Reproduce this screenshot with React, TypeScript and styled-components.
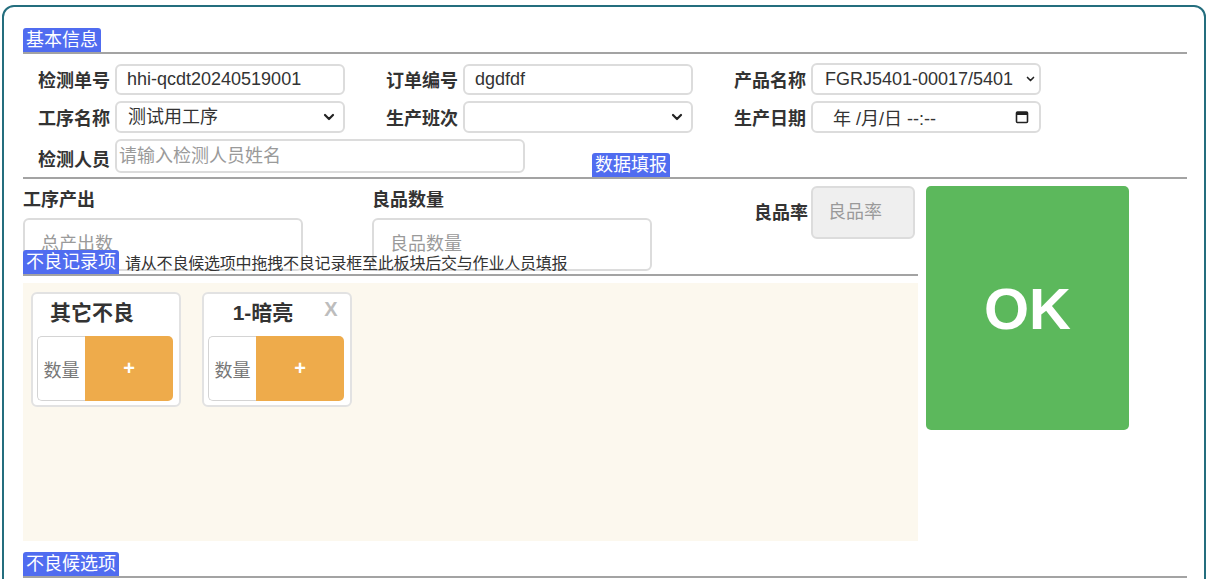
import React from 'react';
import styled, { createGlobalStyle } from 'styled-components';

const GlobalStyle = createGlobalStyle`
    html, body {
        margin: 0;
        padding: 0;
        overflow: hidden;
        background: #ffffff;
    }
    body {
        font-family: "Liberation Sans", "Noto Sans CJK SC", sans-serif;
        color: #333;
    }
    input, select, button {
        font-family: inherit;
    }
`;

const Frame = styled.div`
    margin: 5px 2px 0;
    border: 2px solid #246e7e;
    border-radius: 12px;
    padding: 21px 17px 30px 19px;
`;

const SectionHeader = styled.div<{ $overlap?: boolean; $spaced?: boolean }>`
    display: flex;
    align-items: flex-end;
    gap: 6px;
    border-bottom: 2px solid #a3a3a3;
    position: ${p => (p.$overlap ? 'relative' : 'static')};
    margin-top: ${p => (p.$overlap ? '-21px' : p.$spaced ? '11px' : '0')};
`;

const Tab = styled.span<{ $offset?: number }>`
    display: inline-block;
    background: #506cf0;
    color: #fff;
    font-size: 18px;
    line-height: 24px;
    padding: 0 3px;
    border-radius: 3px 3px 0 0;
    white-space: nowrap;
    margin-left: ${p => p.$offset ?? 0}px;
`;

const Note = styled.span`
    font-size: 16px;
    line-height: 20px;
    letter-spacing: -0.2px;
    color: #333;
    white-space: nowrap;
`;

const FormRows = styled.div`
    display: flex;
    flex-direction: column;
    gap: 6px;
    padding-top: 9px;
`;

const FormRow = styled.div<{ $ruled?: boolean }>`
    display: flex;
    align-items: ${p => (p.$ruled ? 'flex-end' : 'center')};
    gap: 26px;
    border-bottom: ${p => (p.$ruled ? '2px solid #a3a3a3' : 'none')};
`;

const Field = styled.div`
    display: flex;
    align-items: center;
    gap: 5px;
`;

const Label = styled.label`
    width: 87px;
    text-align: right;
    font-size: 18px;
    font-weight: bold;
    color: #333;
    white-space: nowrap;
    align-self: center;
`;

const TextInput = styled.input<{ $width?: number; $height?: number }>`
    box-sizing: border-box;
    width: ${p => p.$width ?? 230}px;
    height: ${p => p.$height ?? 31}px;
    border: 2px solid #dcdcdc;
    border-radius: 6px;
    padding: 0 10px;
    font-size: 18px;
    color: #333;
    background: #fff;
    outline: none;

    &::placeholder {
        color: #9a9a9a;
    }
`;

const WideInput = styled(TextInput)`
    margin-bottom: 4px;
    padding: 0 2px;
`;

const SelectWrap = styled.div`
    position: relative;
    width: 230px;
    height: 32px;
`;

const Select = styled.select<{ $compact?: boolean }>`
    appearance: none;
    box-sizing: border-box;
    width: 100%;
    height: 100%;
    border: 2px solid #dcdcdc;
    border-radius: 6px;
    padding: ${p => (p.$compact ? '0 20px 0 12px' : '0 30px 0 11px')};
    font-size: 18px;
    color: #333;
    background: #fff;
    outline: none;
`;

const Chevron = styled.svg<{ $compact?: boolean }>`
    position: absolute;
    right: ${p => (p.$compact ? 6 : 10)}px;
    top: 50%;
    transform: translateY(-50%);
    pointer-events: none;
`;

const DateBox = styled.div`
    box-sizing: border-box;
    width: 230px;
    height: 32px;
    border: 2px solid #dcdcdc;
    border-radius: 6px;
    background: #fff;
    display: flex;
    align-items: center;
    justify-content: space-between;
    padding: 0 10px 0 20px;
    font-size: 18px;
    color: #333;
    white-space: pre;
`;

const WorkArea = styled.div`
    display: flex;
    align-items: flex-start;
    gap: 8px;
    padding-top: 7px;
`;

const LeftColumn = styled.div`
    width: 895px;
    display: flex;
    flex-direction: column;
`;

const OutputRow = styled.div`
    display: flex;
    align-items: flex-start;
`;

const OutputField = styled.div`
    display: flex;
    flex-direction: column;
    gap: 7px;
    width: 280px;
    margin-right: 69px;
    padding-top: 3px;
`;

const BigLabel = styled.div`
    font-size: 18px;
    line-height: 22px;
    font-weight: bold;
    color: #333;
`;

const BigInput = styled(TextInput)`
    width: 280px;
    height: 53px;
    padding: 0 16px;
`;

const RateGroup = styled.div`
    margin-left: auto;
    margin-right: 3px;
    display: flex;
    align-items: center;
    gap: 3px;
`;

const RateInput = styled(TextInput)`
    width: 104px;
    height: 53px;
    padding: 0 15px;
    background: #efefef;
`;

const DropZone = styled.div`
    margin-top: 7px;
    height: 258px;
    background: #fcf8ee;
    padding: 9px 8px;
    box-sizing: border-box;
    display: flex;
    align-items: flex-start;
    gap: 21px;
`;

const Card = styled.div`
    box-sizing: border-box;
    width: 150px;
    height: 115px;
    background: #fff;
    border: 2px solid #e2e2e2;
    border-radius: 6px;
    padding: 4px 6px 3px 4px;
    display: flex;
    flex-direction: column;
`;

const CardHead = styled.div`
    display: flex;
    align-items: flex-start;
    height: 38px;
`;

const CardTitle = styled.div`
    flex: 1;
    text-align: center;
    font-size: 21px;
    font-weight: bold;
    line-height: 30px;
    color: #333;
`;

const CloseMark = styled.span`
    width: 26px;
    text-align: center;
    font-size: 20px;
    line-height: 22px;
    font-weight: bold;
    color: #bdbdbd;
`;

const QtyGroup = styled.div`
    display: flex;
    height: 65px;
`;

const QtyLabel = styled.div`
    box-sizing: border-box;
    width: 48px;
    border: 1px solid #d4d4d4;
    border-right: none;
    border-radius: 5px 0 0 5px;
    display: flex;
    align-items: center;
    justify-content: center;
    font-size: 18px;
    color: #777;
`;

const AddButton = styled.button`
    flex: 1;
    border: none;
    border-radius: 0 5px 5px 0;
    background: #eeab4b;
    color: #fff;
    font-size: 20px;
    font-weight: bold;
    padding: 0;
`;

const OkButton = styled.button`
    width: 203px;
    height: 244px;
    border: none;
    border-radius: 5px;
    background: #5cb85c;
    color: #fff;
    font-size: 58px;
    font-weight: bold;
    padding: 0;
`;

function ChevronIcon({ compact }: { compact?: boolean }) {
    const w = compact ? 9 : 12;
    return (
        <Chevron $compact={compact} width={w} height={w} viewBox="0 0 12 12">
            <path d="M2 4 L6 8 L10 4" fill="none" stroke="#222" strokeWidth="2.2" strokeLinecap="round" strokeLinejoin="round" />
        </Chevron>
    );
}

function CalendarIcon() {
    return (
        <svg width="14" height="14" viewBox="0 0 14 14">
            <rect x="1.5" y="2" width="11" height="10.5" rx="1" fill="none" stroke="#222" strokeWidth="1.6" />
            <rect x="1.5" y="2" width="11" height="3" fill="#222" />
        </svg>
    );
}

function SelectField({ value, options, compact }: { value: string; options: string[]; compact?: boolean }) {
    return (
        <SelectWrap>
            <Select $compact={compact} defaultValue={value}>
                {options.map(o => (
                    <option key={o} value={o}>{o}</option>
                ))}
            </Select>
            <ChevronIcon compact={compact} />
        </SelectWrap>
    );
}

type Defect = { name: string; removable: boolean };

const defects: Defect[] = [
    { name: '其它不良', removable: false },
    { name: '1-暗亮', removable: true },
];

function DefectCard({ defect }: { defect: Defect }) {
    return (
        <Card>
            <CardHead>
                <CardTitle>{defect.name}</CardTitle>
                <CloseMark>{defect.removable ? 'X' : ''}</CloseMark>
            </CardHead>
            <QtyGroup>
                <QtyLabel>数量</QtyLabel>
                <AddButton>+</AddButton>
            </QtyGroup>
        </Card>
    );
}

export default function App() {
    return (
        <>
            <GlobalStyle />
            <Frame>
                <SectionHeader>
                    <Tab>基本信息</Tab>
                </SectionHeader>
                <FormRows>
                    <FormRow>
                        <Field>
                            <Label>检测单号</Label>
                            <TextInput defaultValue="hhi-qcdt20240519001" />
                        </Field>
                        <Field>
                            <Label>订单编号</Label>
                            <TextInput defaultValue="dgdfdf" />
                        </Field>
                        <Field>
                            <Label>产品名称</Label>
                            <SelectField compact value="FGRJ5401-00017/5401" options={['FGRJ5401-00017/5401']} />
                        </Field>
                    </FormRow>
                    <FormRow>
                        <Field>
                            <Label>工序名称</Label>
                            <SelectField value="测试用工序" options={['测试用工序']} />
                        </Field>
                        <Field>
                            <Label>生产班次</Label>
                            <SelectField value="" options={['']} />
                        </Field>
                        <Field>
                            <Label>生产日期</Label>
                            <DateBox>
                                <span>年 /月/日 --:--</span>
                                <CalendarIcon />
                            </DateBox>
                        </Field>
                    </FormRow>
                    <FormRow $ruled>
                        <Field>
                            <Label>检测人员</Label>
                            <WideInput $width={410} $height={34} placeholder="请输入检测人员姓名" />
                        </Field>
                        <Tab $offset={41}>数据填报</Tab>
                    </FormRow>
                </FormRows>
                <WorkArea>
                    <LeftColumn>
                        <OutputRow>
                            <OutputField>
                                <BigLabel>工序产出</BigLabel>
                                <BigInput placeholder="总产出数" />
                            </OutputField>
                            <OutputField>
                                <BigLabel>良品数量</BigLabel>
                                <BigInput placeholder="良品数量" />
                            </OutputField>
                            <RateGroup>
                                <BigLabel>良品率</BigLabel>
                                <RateInput disabled placeholder="良品率" />
                            </RateGroup>
                        </OutputRow>
                        <SectionHeader $overlap>
                            <Tab>不良记录项</Tab>
                            <Note>请从不良候选项中拖拽不良记录框至此板块后交与作业人员填报</Note>
                        </SectionHeader>
                        <DropZone>
                            {defects.map(d => (
                                <DefectCard key={d.name} defect={d} />
                            ))}
                        </DropZone>
                    </LeftColumn>
                    <OkButton>OK</OkButton>
                </WorkArea>
                <SectionHeader $spaced>
                    <Tab>不良候选项</Tab>
                </SectionHeader>
            </Frame>
        </>
    );
}
